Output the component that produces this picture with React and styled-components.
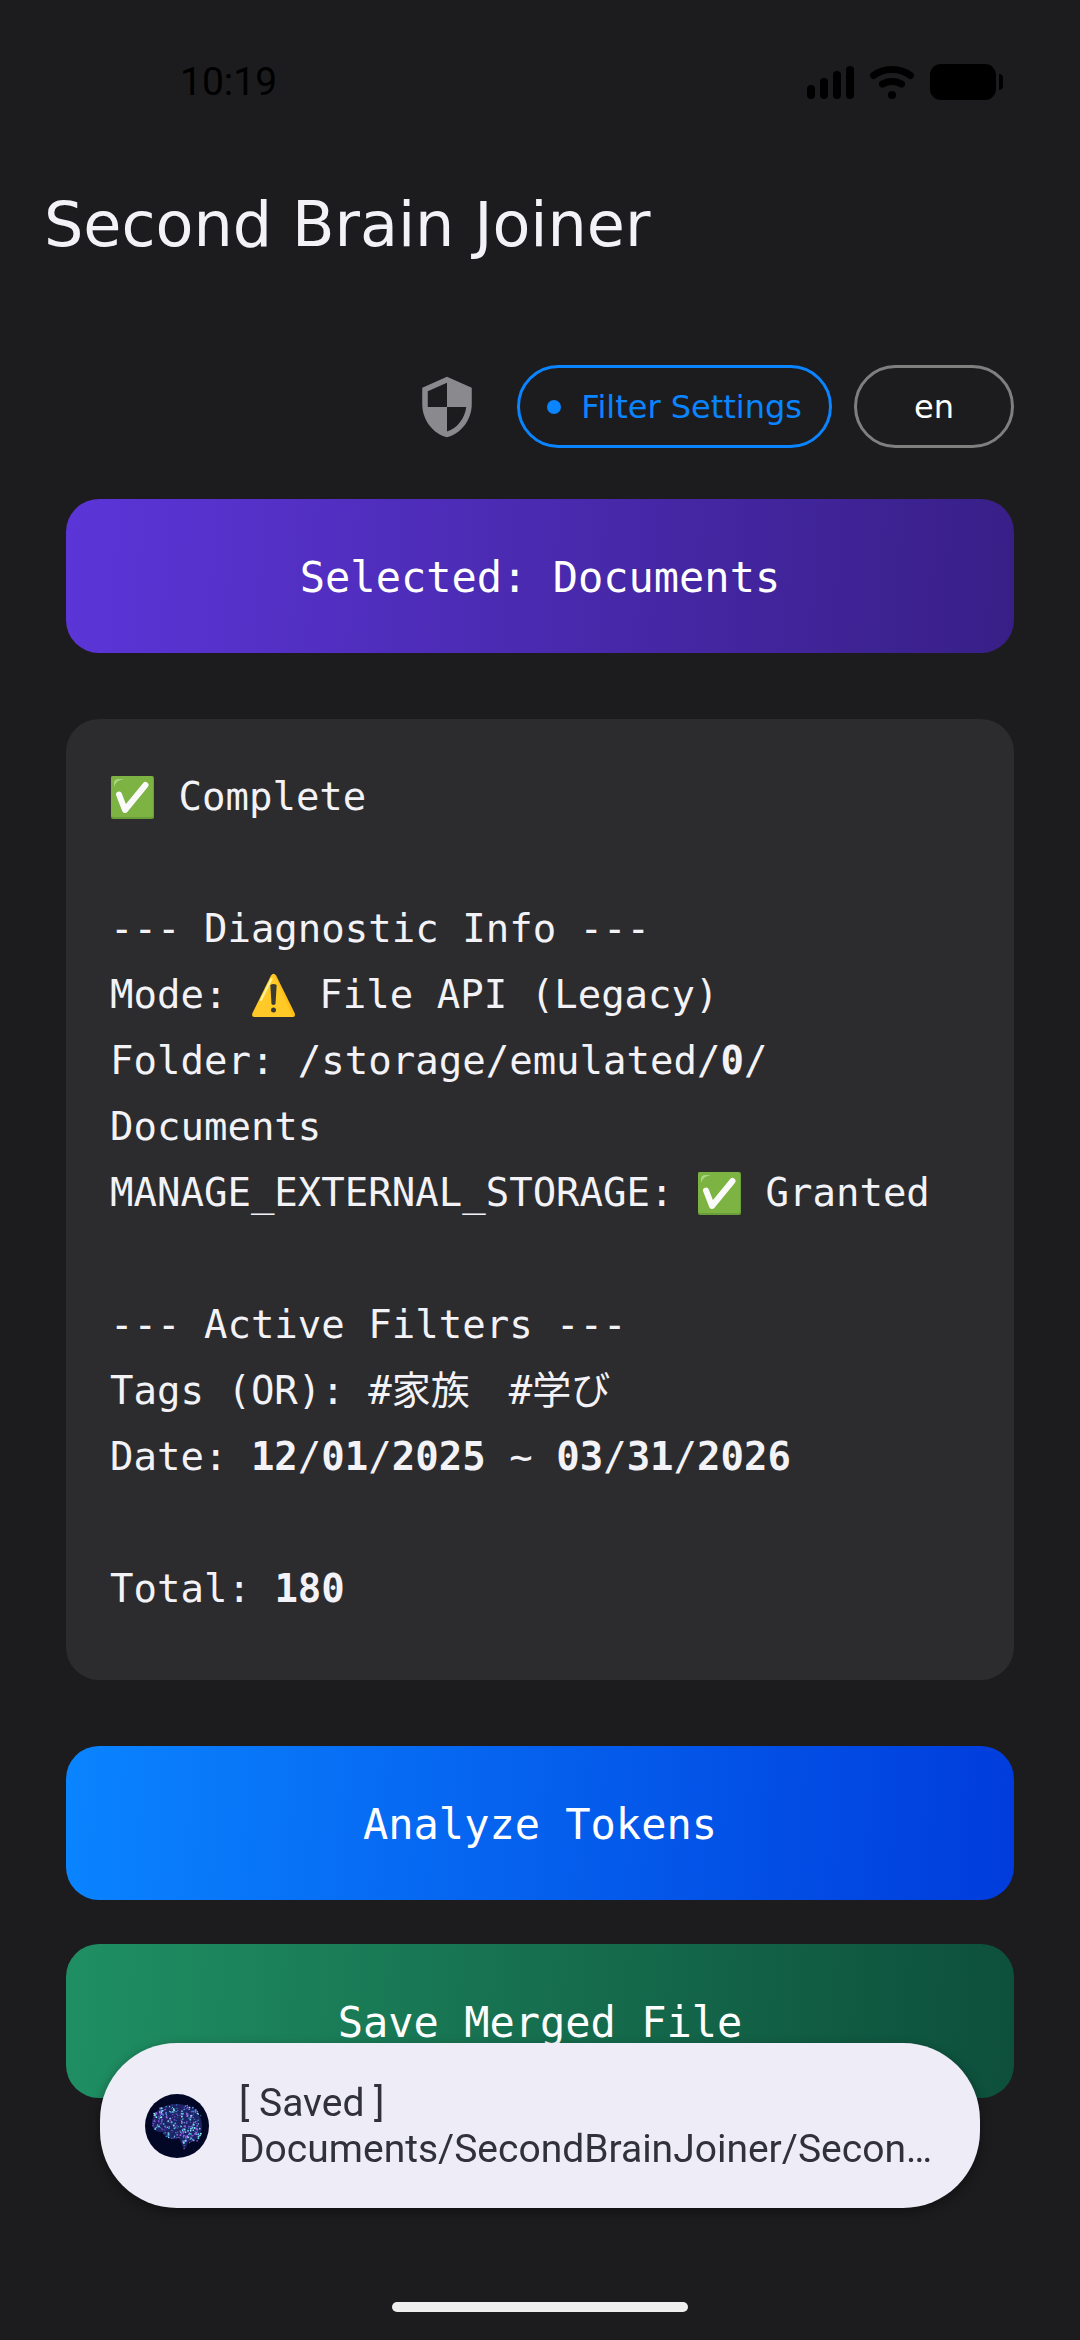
import styled, { createGlobalStyle } from "styled-components";
import React from "react";
import { MdSecurity } from "react-icons/md";

const GlobalStyle = createGlobalStyle`
  * {
    box-sizing: border-box;
  }
  body {
    margin: 0;
    background-color: #1c1c1e;
    color: #f2f2f7;
    font-family: "DejaVu Sans", "Noto Sans CJK JP", sans-serif;
  }
`;

const Screen = styled.div`
  display: flex;
  flex-direction: column;
  min-height: 100vh;
`;

const StatusBar = styled.header`
  display: flex;
  align-items: center;
  justify-content: space-between;
  height: 164px;
  padding: 0 76px 0 180px;
  color: #000000;
  font-family: Roboto, sans-serif;
  font-size: 39px;
`;

const StatusIcons = styled.div`
  display: flex;
  align-items: center;
  gap: 16px;
  svg {
    display: block;
  }
`;

const Title = styled.h1`
  margin: 0;
  padding: 0 44px;
  font-size: 62px;
  font-weight: normal;
  line-height: 122px;
`;

const Content = styled.main`
  display: flex;
  flex-direction: column;
  padding: 79px 66px 240px;
`;

const Toolbar = styled.div`
  display: flex;
  align-items: center;
  justify-content: flex-end;
  gap: 22px;
  margin-bottom: 51px;
`;

const ShieldButton = styled.button`
  display: flex;
  margin: 0 15px 0 0;
  padding: 0;
  border: none;
  background: none;
  color: #8a8a8e;
  cursor: pointer;
`;

const Pill = styled.button`
  display: flex;
  align-items: center;
  justify-content: center;
  gap: 20px;
  min-width: 160px;
  height: 83px;
  padding: 0 27px;
  border: solid 3px ${(props) => props.$border};
  border-radius: 42px;
  background: none;
  color: ${(props) => props.$color};
  font-family: inherit;
  font-size: 32px;
  cursor: pointer;
`;

const Dot = styled.span`
  width: 14px;
  height: 14px;
  border-radius: 50%;
  background-color: currentColor;
`;

const ActionButton = styled.button`
  width: 100%;
  height: 154px;
  padding: 2px 20px 0;
  border: none;
  border-radius: 33px;
  background: linear-gradient(
    94deg,
    ${(props) => props.$from},
    ${(props) => props.$to}
  );
  color: #ffffff;
  font-family: "DejaVu Sans Mono", monospace;
  font-size: 42px;
  cursor: pointer;
`;

const InfoCard = styled.section`
  margin: 66px 0;
  padding: 45px 44px 58px;
  border-radius: 33px;
  background-color: #2c2c2e;
  font-family: "DejaVu Sans Mono", "Noto Sans CJK JP", monospace;
  font-size: 39px;
`;

const Line = styled.p`
  display: flex;
  align-items: center;
  height: 66px;
  margin: 0;
  line-height: 66px;
  white-space: pre;
`;

const EmojiIcon = styled.svg`
  flex: none;
  width: 45px;
  height: 45px;
`;

const Actions = styled.div`
  display: flex;
  flex-direction: column;
  gap: 44px;
`;

const Toast = styled.div`
  position: fixed;
  right: 100px;
  bottom: 132px;
  left: 100px;
  display: flex;
  align-items: center;
  gap: 30px;
  padding: 37px 45px 36px;
  border-radius: 77px;
  background-color: #eeecf6;
  color: #30313a;
  box-shadow: 0 4px 12px rgba(0, 0, 0, 0.4);
  font-family: Roboto, sans-serif;
  font-size: 39px;
  line-height: 46px;
  svg {
    flex: none;
  }
`;

const ToastText = styled.div`
  overflow: hidden;
  white-space: nowrap;
`;

const HomeIndicator = styled.div`
  position: fixed;
  bottom: 28px;
  left: 50%;
  width: 296px;
  height: 10px;
  margin-left: -148px;
  border-radius: 5px;
  background-color: #eeeeee;
`;

const SignalIcon = () => (
  <svg width="47" height="36" viewBox="0 0 47 36">
    <rect x="0" y="21" width="8" height="14" rx="4" />
    <rect x="13" y="14" width="8" height="21" rx="4" />
    <rect x="26" y="7" width="8" height="28" rx="4" />
    <rect x="39" y="2" width="8" height="33" rx="4" />
  </svg>
);

const WifiIcon = () => (
  <svg width="44" height="36" viewBox="0 0 44 36">
    <g fill="none" stroke="#000" strokeWidth="7" strokeLinecap="round">
      <path d="M3.5 11.5C14 3.5 30 3.5 40.5 11.5" />
      <path d="M12.5 20C18 16.5 26 16.5 31.5 20" />
    </g>
    <circle cx="22" cy="31" r="4" />
  </svg>
);

const BatteryIcon = () => (
  <svg width="74" height="36" viewBox="0 0 74 36">
    <rect width="66" height="36" rx="11" />
    <path d="M69 10c3 0 4 2 4 4v8c0 2-1 4-4 4z" />
  </svg>
);

const CheckMark = () => (
  <EmojiIcon viewBox="0 0 45 45" role="img" aria-label="Done">
    <rect x="1" y="1" width="43" height="43" rx="2" fill="#689f38" />
    <rect x="1" y="1" width="42" height="41" rx="2" fill="#7cb342" />
    <path d="M4 12V8q0-4 5-4h5Q6 5 4 12z" fill="#aed581" />
    <path
      d="M9 19.5L15 35 35.5 10"
      fill="none"
      stroke="#fafafa"
      strokeWidth="6"
      strokeLinecap="round"
      strokeLinejoin="round"
    />
  </EmojiIcon>
);

const WarningSign = () => (
  <EmojiIcon viewBox="0 0 45 45" role="img" aria-label="Warning">
    <path
      d="M20 2.5q2.5-3.5 5 0L43.5 40q1.5 4-2 4H3.5q-3.5 0-2-4z"
      fill="#ffca28"
    />
    <path
      d="M23 1.2q1.5 0 2.5 2L43.5 40q1.5 4-2 4z"
      fill="#ffb300"
      opacity=".45"
    />
    <path
      d="M20.5 6L10 27"
      stroke="#fff59d"
      strokeWidth="2"
      strokeLinecap="round"
    />
    <path d="M19.3 12q3.2-2 6.4 0L24.5 31q-2 2-4 0z" fill="#3b3b33" />
    <circle cx="22.5" cy="37" r="2.5" fill="#3b3b33" />
  </EmojiIcon>
);

const inEllipse = (x, y, cx, cy, rx, ry) =>
  ((x - cx) / rx) ** 2 + ((y - cy) / ry) ** 2 < 1;

const insideBrain = (x, y) =>
  inEllipse(x, y, 32, 25, 25, 15) ||
  inEllipse(x, y, 17, 29, 10, 9) ||
  inEllipse(x, y, 30, 37, 12, 8) ||
  inEllipse(x, y, 46, 39, 10, 10) ||
  (y > 42 && y < 55 && x > 28 + y / 5 && x < 43 - (y - 42) / 6);

const neuronColors = ["#5fd6e6", "#9a5fe0", "#4f8fdc", "#7a45c8", "#8af0f0"];

// seeded, so the logo looks the same on every load
const makeNeurons = (count) => {
  const neurons = [];
  let seed = 7;
  const random = () => {
    seed = (seed * 16807) % 2147483647;
    return seed / 2147483647;
  };
  while (neurons.length < count) {
    const x = 6 + random() * 52;
    const y = 9 + random() * 46;
    if (insideBrain(x, y)) {
      neurons.push({
        x,
        y,
        r: 0.4 + random() * 0.6,
        color: neuronColors[Math.floor(random() * neuronColors.length)],
      });
    }
  }
  return neurons;
};

const neurons = makeNeurons(320);

const BrainLogo = () => (
  <svg width="64" height="64" viewBox="0 0 64 64">
    <circle cx="32" cy="32" r="32" fill="#020726" />
    <path
      d="M7 28C8 16 20 10 32 10c14 0 25 9 25 21 0 10-5 17-14 17l-2 6-3-1-4-9c-7 3-14 0-16-6-7 1-11-3-11-10z"
      fill="#1c2466"
    />
    {neurons.map((neuron, i) => (
      <circle
        key={i}
        cx={neuron.x}
        cy={neuron.y}
        r={neuron.r}
        fill={neuron.color}
      />
    ))}
  </svg>
);

const App = () => {
  return (
    <Screen>
      <GlobalStyle />
      <StatusBar>
        <time>10:19</time>
        <StatusIcons>
          <SignalIcon />
          <WifiIcon />
          <BatteryIcon />
        </StatusIcons>
      </StatusBar>
      <Title>Second Brain Joiner</Title>
      <Content>
        <Toolbar>
          <ShieldButton aria-label="Permissions">
            <MdSecurity size={66} />
          </ShieldButton>
          <Pill $border="#0a84ff" $color="#0a84ff">
            <Dot />
            Filter Settings
          </Pill>
          <Pill $border="#7f7f80" $color="#ffffff">
            en
          </Pill>
        </Toolbar>
        <ActionButton $from="#5c35d8" $to="#381f87">
          Selected: Documents
        </ActionButton>
        <InfoCard>
          <Line>
            <CheckMark /> Complete
          </Line>
          <Line />
          <Line>--- Diagnostic Info ---</Line>
          <Line>
            Mode: <WarningSign /> File API (Legacy)
          </Line>
          <Line>
            Folder: /storage/emulated/<b>0</b>/
          </Line>
          <Line>Documents</Line>
          <Line>
            MANAGE_EXTERNAL_STORAGE: <CheckMark /> Granted
          </Line>
          <Line />
          <Line>--- Active Filters ---</Line>
          <Line>Tags (OR): #家族　#学び</Line>
          <Line>
            Date: <b>12</b>/<b>01</b>/<b>2025</b> ~ <b>03</b>/<b>31</b>/
            <b>2026</b>
          </Line>
          <Line />
          <Line>
            Total: <b>180</b>
          </Line>
        </InfoCard>
        <Actions>
          <ActionButton $from="#0a84ff" $to="#003cdc">
            Analyze Tokens
          </ActionButton>
          <ActionButton $from="#1f8f63" $to="#0d4f3b">
            Save Merged File
          </ActionButton>
        </Actions>
      </Content>
      <Toast role="status">
        <BrainLogo />
        <ToastText>
          <div>[ Saved ]</div>
          <div>Documents/SecondBrainJoiner/Secon…</div>
        </ToastText>
      </Toast>
      <HomeIndicator />
    </Screen>
  );
};

export default App;
